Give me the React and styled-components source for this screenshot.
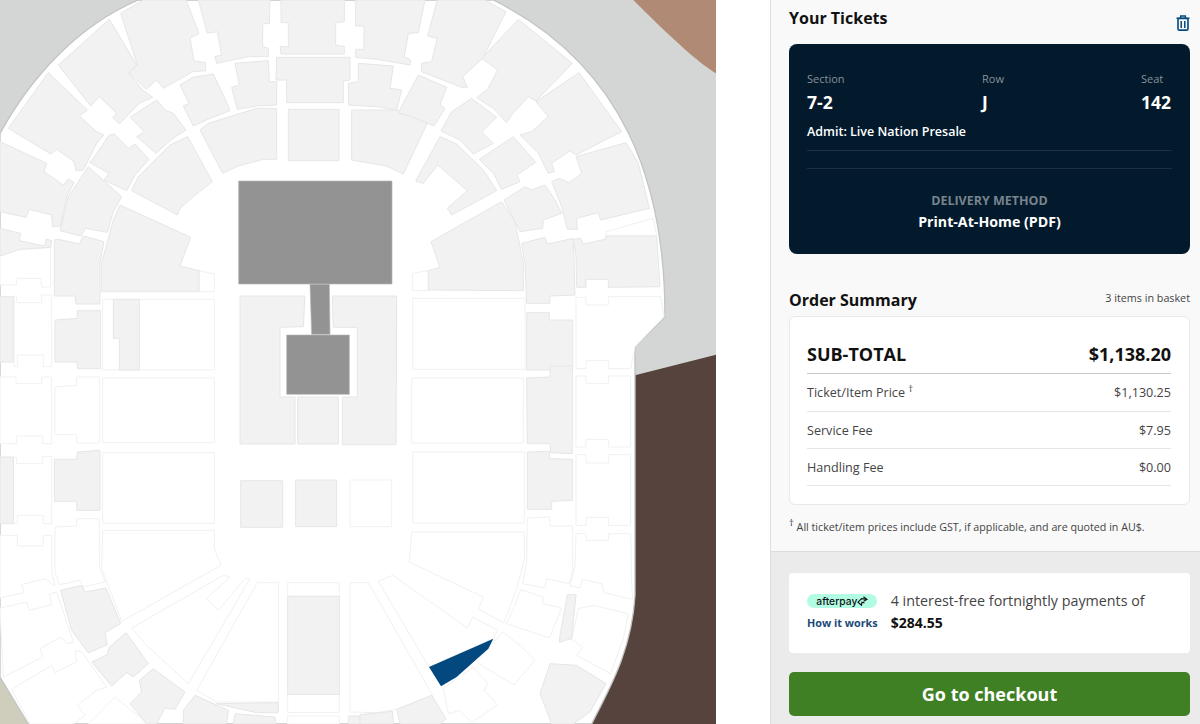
import React from 'react'
import styled, { createGlobalStyle } from 'styled-components'

const GlobalStyle = createGlobalStyle`
  html, body {
    margin: 0;
    padding: 0;
    height: 100%;
    overflow: hidden;
    background: #fff;
    font-family: "Open Sans", "Liberation Sans", sans-serif;
  }
  * { box-sizing: border-box; }
`

// seat map polygons, coordinates are 3x page pixels, one list per quadrant
const quadrants = [
  {
    dx: 0,
    dy: 0,
    shaded: [
      '362,40 430,0 558,0 597,100 570,115 582,183 617,188 617,212 578,215 490,265 470,240 438,268 385,215 412,195',
      '595,0 810,0 808,70 788,72 788,140 805,145 805,170 745,170 650,190 645,170 665,165 652,95 622,100',
      '843,0 1033,0 1033,65 1007,68 1007,135 1033,140 1033,162 843,162 840,140 865,140 865,68 843,68',
      '175,195 328,58 410,195 386,218 428,270 458,292 418,310 358,372 338,352 350,340 298,290 272,318',
      '25,385 145,218 262,330 238,348 290,395 312,405 290,430 250,510 228,512 222,485 170,448 152,462',
      '0,425 140,490 132,515 190,555 205,537 222,548 200,590 182,678 158,680 155,645 88,628 78,652 0,635',
      '0,685 62,700 58,722 133,738 140,717 155,722 152,742 60,748 0,768',
      '705,190 805,182 808,245 830,245 830,315 770,318 712,328 695,262 718,255',
      '830,172 1050,172 1050,240 1030,243 1030,308 860,308 860,240 828,240',
      '540,255 578,232 640,222 677,300 690,332 630,355 580,378 550,318 567,310',
      '390,352 470,300 495,330 520,340 558,390 515,418 468,460 410,410 433,395',
      '600,390 625,370 770,325 830,325 830,478 790,478 715,498 668,520',
      '865,328 1017,328 1017,482 865,482',
      '1055,330 1190,330 1208,338 1290,352 1210,522 1160,498 1055,480',
      '275,482 328,405 343,402 385,445 405,432 447,478 405,525 380,572 312,540 327,520 268,487',
      '395,572 415,530 470,475 510,435 563,410 637,545 580,590 540,625 532,645',
      '180,692 205,590 265,500 365,590 340,635 322,697 257,685 243,708',
      '305,790 340,660 360,615 572,712 540,798 597,812 597,875 305,875',
      '163,720 175,718 238,732 250,708 312,725 300,790 300,912 228,912 225,888 163,888',
      '165,960 232,955 232,932 302,932 302,1106 232,1106 232,1086 165,1086',
      '0,890 40,890 40,1086 0,1086',
      '340,898 418,898 418,1110 358,1110 358,1015 340,1015',
      '720,888 915,888 910,980 840,982 840,1191 885,1191 885,1332 720,1332',
      '997,888 1190,888 1188,1334 1027,1334 1027,1191 1072,1191 1072,982 1000,982',
      '893,1191 1015,1191 1015,1332 893,1332',
      '1045,250 1075,245 1075,190 1180,198 1170,265 1205,270 1190,330 1130,320 1045,315',
      '1067,0 1275,0 1255,98 1225,100 1213,170 1232,180 1230,195 1130,178 1067,172 1067,148 1092,148 1092,78 1067,78',
    ],
    blank: [
      '0,768 60,748 152,742 152,860 125,862 122,835 50,835 50,855 0,855',
      '597,812 643,822 643,875 597,875',
      '42,888 50,888 50,908 125,908 125,885 155,885 155,1100 130,1100 130,1065 52,1065 52,1100 42,1100',
      '308,898 643,898 643,1110 308,1110',
    ],
  },
  {
    dx: 1080,
    dy: 0,
    shaded: [
      '232,0 375,0 438,35 368,175 308,230 322,262 305,262 185,215 185,190 215,185 232,115 203,108',
      '475,58 637,190 528,303 505,290 455,345 440,368 400,325 350,293 383,268 413,210 365,175',
      '657,218 785,395 648,465 630,452 575,490 583,515 565,520 535,460 480,405 515,395 565,350 528,305',
      '798,428 835,490 868,625 722,660 715,638 650,655 652,688 622,687 605,620 575,545 598,535 628,548 665,520 648,470',
      '640,718 662,715 670,732 735,718 738,708 890,708 900,860 745,862 745,838 678,838 678,862 650,862 648,770',
      '175,225 260,262 240,315 255,325 222,378 155,350 115,338',
      '335,295 410,352 365,395 400,430 340,462 300,420 243,393 275,335',
      '358,478 460,410 527,487 470,525 480,545 425,568 400,520',
      '240,410 290,432 370,510 410,572 275,645 262,625 322,572 233,495 190,550 167,543',
      '213,725 425,605 465,665 490,790 490,872 205,870 205,812 240,802',
      '432,600 495,560 515,570 555,555 585,600 605,640 550,660 548,685 480,695',
      '485,730 555,712 562,732 640,715 645,885 570,888 570,910 500,910 495,790',
      '500,938 568,938 568,960 638,960 638,1110 500,1110',
    ],
    blank: [
      '738,695 880,655 890,708 738,708',
      '157,820 205,812 205,872 157,872',
      '158,895 495,895 495,1108 158,1108',
      '648,892 678,892 678,915 745,915 745,890 902,890 912,950 825,1040 812,1106 745,1106 745,1082 678,1082 678,1106 648,1106',
    ],
  },
  {
    dx: 0,
    dy: 1086,
    shaded: [
      '163,292 230,292 232,270 300,265 300,445 230,445 230,418 163,418',
      '0,285 40,285 40,485 0,485',
      '182,685 245,670 255,690 318,678 362,785 315,812 322,848 265,873 215,805',
      '275,900 322,878 328,855 378,812 445,905 400,945 380,932 335,972',
      '460,920 555,990 525,1042 495,1038 470,1086 440,1086 390,1025 425,990 418,955',
      '650,1025 835,1022 835,1052 770,1052',
      '863,703 1018,703 1018,997 863,997',
      '722,356 848,356 848,496 722,496',
      '887,354 1010,354 1010,494 887,494',
      '585,1000 685,1045 680,1086 550,1086 550,1045',
      '705,1055 825,1065 828,1086 700,1086',
      '1045,1062 1080,1062 1080,1086 1045,1086',
    ],
    blank: [
      '308,48 643,48 643,242 308,242',
      '308,272 643,272 643,484 308,484',
      '308,505 643,505 643,560 663,610 365,778 340,710 305,620',
      '165,75 230,70 230,45 298,45 298,243 230,243 230,218 165,218',
      '165,495 230,492 230,470 298,470 298,615 315,660 250,675 240,655 178,668 165,630',
      '0,45 48,45 48,65 125,65 125,45 155,45 155,245 128,245 128,222 50,222 50,245 0,245',
      '40,285 50,285 50,305 128,305 128,283 155,283 155,485 130,485 130,460 52,460 52,485 40,485',
      '0,520 52,520 52,552 130,552 130,520 155,520 155,630 165,672 135,650 65,668 72,692 0,708',
      '0,738 80,720 88,745 155,728 148,697 170,690 220,840 200,845 182,825 120,860 128,885 10,945',
      '35,982 155,910 165,932 230,900 225,865 245,870 320,975 290,985 232,1030 255,1060 220,1086 90,1086',
      '345,1005 445,1086 265,1086',
      '395,798 670,640 690,645 620,710 655,745 735,650 750,650 565,965 440,850',
      '772,662 835,662 835,1020 650,1020 590,985',
      '863,662 1018,662 1018,703 863,703',
      '863,997 1018,997 1018,1052 863,1052',
      '863,1062 1018,1062 1018,1086 863,1086',
      '1050,662 1105,662 1298,1000 1200,1040 1130,1052 1050,1050',
      '1050,354 1175,354 1175,494 1050,494',
    ],
  },
  {
    dx: 1080,
    dy: 1086,
    shaded: [
      '500,48 570,45 570,12 637,12 637,275 572,272 570,245 502,245',
      '502,270 568,268 568,290 637,292 637,415 575,418 575,442 502,442',
      '622,698 648,698 635,830 615,835 598,842 600,820',
      '540,995 570,905 650,910 738,965 690,1050 640,1086 575,1086',
      '110,1042 215,1000 258,1070 240,1086 120,1086',
      '0,1058 98,1048 100,1086 0,1086',
    ],
    blank: [
      '155,48 490,48 490,243 155,243',
      '158,270 493,270 493,483 158,483',
      '155,510 493,510 493,590 470,680 432,782 355,742 370,705 148,600',
      '55,658 98,640 322,798 338,765 413,805 400,830 207,915',
      '502,468 570,465 570,492 638,492 638,620 628,665 560,650 555,678 488,665 500,600',
      '648,42 678,42 678,65 745,65 745,42 812,42 812,255 745,255 745,232 678,232 678,255 648,255',
      '648,278 678,278 678,303 745,303 745,278 812,278 812,490 745,490 745,466 678,466 678,490 648,490',
      '648,515 678,515 678,535 745,535 745,515 812,515 815,660 818,712 732,692 725,665 668,652 660,678 630,672 645,610',
      '482,683 550,705 548,725 605,738 568,828 440,785 465,730',
      '700,730 805,755 790,830 752,935 650,880 668,855 635,832 655,740',
      '428,810 480,850 525,895 462,968 410,938 350,900',
      '250,980 340,915 383,965 372,985 412,1028 335,1082 300,1045 265,1055',
    ],
  },
]

const darkBlocks = [
  '716,543 1176,543 1176,852 716,852',
  '930,853 988,853 990,1003 935,1003',
  '860,1005 1048,1005 1048,1183 860,1183',
]

const SeatMap = () => (
  <MapSvg viewBox="0 0 2148 2172" preserveAspectRatio="none">
    <rect width="2148" height="2172" fill="#d3d6d4" />
    <path d="M1900,0 C1960,60 2080,180 2150,222 L2150,0 Z" fill="#b08a74" />
    <path d="M1905,1126 L2150,1064 L2150,2172 L1700,2172 Z" fill="#57433d" />
    <path d="M0,2020 L100,2172 L0,2172 Z" fill="#cfcdbb" />
    <path
      d="M0,400 C100,220 240,75 415,0 L1480,0 C1880,200 1995,560 1995,950 L1905,1040 L1905,1786 C1895,1960 1820,2080 1775,2172 L85,2172 L0,2031 Z"
      fill="#fff"
      stroke="#c2c5c3"
      strokeWidth="4"
    />
    {quadrants.map((q) => (
      <g key={`${q.dx}-${q.dy}`} transform={`translate(${q.dx} ${q.dy})`}>
        {q.blank.map((pts) => (
          <polygon key={pts} points={pts} fill="#fff" stroke="#f1f1f1" strokeWidth="3" />
        ))}
        {q.shaded.map((pts) => (
          <polygon key={pts} points={pts} fill="#f2f2f2" stroke="#e6e6e6" strokeWidth="3" />
        ))}
      </g>
    ))}
    {darkBlocks.map((pts) => (
      <polygon key={pts} points={pts} fill="#939393" stroke="#b5b5b5" strokeWidth="2" />
    ))}
    <polygon points="1287,2001 1480,1916 1465,1946 1370,2031 1323,2059" fill="#03497f" />
  </MapSvg>
)

const TrashIcon = () => (
  <svg width="14" height="16" viewBox="0 0 14 16" fill="none" stroke="#03497f">
    <path d="M0.5 3.2 H13.5" strokeWidth="1.5" />
    <path d="M4.6 3 V1 H9.4 V3" strokeWidth="1.3" />
    <rect x="2" y="3.5" width="10" height="11.6" rx="1" strokeWidth="1.6" />
    <path d="M5.2 6 V13 M8.8 6 V13" strokeWidth="1.5" />
  </svg>
)

const AfterpayLoop = () => (
  <svg width="11" height="10" viewBox="0 0 11 10" fill="none" stroke="#111" strokeWidth="1.2">
    <path d="M6.4 0.8 L10 3.4 L6.6 5.2" />
    <path d="M9.6 3.4 L4.6 2.6 L1 6.2 L4.4 9.2 L5 6.2 L7.4 6.8" />
  </svg>
)

export default function App() {
  return (
    <>
      <GlobalStyle />
      <Page>
        <MapPanel>
          <SeatMap />
        </MapPanel>
        <Sidebar>
          <Scroller>
            <HeadRow>
              <Title>Your Tickets</Title>
              <TrashButton>
                <TrashIcon />
              </TrashButton>
            </HeadRow>
            <TicketCard>
              <SeatGrid>
                <SeatCol>
                  <SeatLabel>Section</SeatLabel>
                  <SeatValue>7-2</SeatValue>
                </SeatCol>
                <SeatCol>
                  <SeatLabel>Row</SeatLabel>
                  <SeatValue>J</SeatValue>
                </SeatCol>
                <SeatCol>
                  <SeatLabel>Seat</SeatLabel>
                  <SeatValue>142</SeatValue>
                </SeatCol>
              </SeatGrid>
              <Admit>Admit: Live Nation Presale</Admit>
              <TicketRule />
              <Delivery>
                <DeliveryLabel>DELIVERY METHOD</DeliveryLabel>
                <DeliveryValue>Print-At-Home (PDF)</DeliveryValue>
              </Delivery>
            </TicketCard>
            <SummaryHead>
              <Title>Order Summary</Title>
              <ItemCount>3 items in basket</ItemCount>
            </SummaryHead>
            <SummaryCard>
              <TotalRow>
                <span>SUB-TOTAL</span>
                <span>$1,138.20</span>
              </TotalRow>
              <FeeRow>
                <span>
                  Ticket/Item Price <Dagger>†</Dagger>
                </span>
                <span>$1,130.25</span>
              </FeeRow>
              <FeeRow>
                <span>Service Fee</span>
                <span>$7.95</span>
              </FeeRow>
              <FeeRow>
                <span>Handling Fee</span>
                <span>$0.00</span>
              </FeeRow>
            </SummaryCard>
            <Footnote>
              <Dagger>†</Dagger> All ticket/item prices include GST, if applicable, and are quoted in AU$.
            </Footnote>
          </Scroller>
          <Footer>
            <AfterpayCard>
              <AfterpayLeft>
                <AfterpayBadge>
                  afterpay
                  <AfterpayLoop />
                </AfterpayBadge>
                <HowLink>How it works</HowLink>
              </AfterpayLeft>
              <AfterpayText>
                <span>4 interest-free fortnightly payments of</span>
                <strong>$284.55</strong>
              </AfterpayText>
            </AfterpayCard>
            <CheckoutButton>Go to checkout</CheckoutButton>
          </Footer>
        </Sidebar>
      </Page>
    </>
  )
}

const Page = styled.div`
  display: flex;
  justify-content: space-between;
  width: 1200px;
  height: 724px;
  overflow: hidden;
  background: #fff;
`

const MapPanel = styled.div`
  width: 716px;
  height: 724px;
  flex: none;
`

const MapSvg = styled.svg`
  display: block;
  width: 100%;
  height: 100%;
`

const Sidebar = styled.aside`
  display: flex;
  flex-direction: column;
  width: 430px;
  height: 724px;
  flex: none;
  border-left: 1px solid #dedede;
  background: #f9f9f9;
  color: #111;
`

const Scroller = styled.div`
  height: 552px;
  flex: none;
  padding: 7px 10px 0 18px;
  border-bottom: 1px solid #dcdcdc;
`

const HeadRow = styled.div`
  display: flex;
  justify-content: space-between;
  height: 37px;
`

const Title = styled.h2`
  margin: 0;
  font-size: 16px;
  line-height: 22px;
  font-weight: 700;
  color: #111;
`

const TrashButton = styled.span`
  display: flex;
  align-items: flex-start;
  padding-top: 8px;
`

const TicketCard = styled.div`
  height: 210px;
  padding: 27px 18px 0;
  border-radius: 8px;
  background: #021a2c;
  color: #fff;
`

const SeatGrid = styled.div`
  display: grid;
  grid-template-columns: 175px 1fr 31px;
`

const SeatCol = styled.div`
  display: flex;
  flex-direction: column;
`

const SeatLabel = styled.span`
  font-size: 11px;
  line-height: 15px;
  color: #87929b;
`

const SeatValue = styled.span`
  margin-top: 4px;
  font-size: 17.5px;
  line-height: 24px;
  font-weight: 700;
`

const Admit = styled.div`
  margin-top: 9px;
  padding-bottom: 9px;
  border-bottom: 1px solid #1b3042;
  font-size: 12.5px;
  line-height: 18px;
  font-weight: 600;
`

const TicketRule = styled.div`
  height: 1px;
  margin-top: 17px;
  background: #1b3042;
`

const Delivery = styled.div`
  display: flex;
  flex-direction: column;
  align-items: center;
  padding-top: 24px;
`

const DeliveryLabel = styled.span`
  font-size: 12.5px;
  line-height: 16px;
  font-weight: 700;
  color: #77838d;
`

const DeliveryValue = styled.span`
  margin-top: 3px;
  font-size: 14.2px;
  line-height: 20px;
  font-weight: 700;
`

const SummaryHead = styled.div`
  display: flex;
  justify-content: space-between;
  align-items: flex-start;
  height: 37px;
  margin-top: 26px;
  padding-top: 9px;
`

const ItemCount = styled.span`
  padding-top: 1px;
  font-size: 10.75px;
  line-height: 16px;
  color: #444;
`

const SummaryCard = styled.div`
  height: 189px;
  margin-top: -1px;
  padding: 21px 18px 0 17px;
  border: 1px solid #e9e9e9;
  border-radius: 6px;
  background: #fff;
`

const TotalRow = styled.div`
  display: flex;
  justify-content: space-between;
  align-items: center;
  height: 36px;
  padding-bottom: 3px;
  border-bottom: 1px solid #c9c9c9;
  font-size: 18px;
  font-weight: 700;
  color: #111;
`

const FeeRow = styled.div`
  display: flex;
  justify-content: space-between;
  align-items: center;
  height: 37px;
  border-bottom: 1px solid #e6e6e6;
  font-size: 12.6px;
  color: #444;

  ${TotalRow} + & {
    height: 38px;
  }
`

const Dagger = styled.sup`
  font-size: 9.5px;
  line-height: 0;
  color: #333;
`

const Footnote = styled.p`
  margin: 14px 0 0;
  font-size: 10.7px;
  line-height: 16px;
  color: #444;
`

const Footer = styled.div`
  display: flex;
  flex: 1;
  flex-direction: column;
  gap: 19px;
  padding: 21px 10px 0 18px;
  background: #ebebeb;
`

const AfterpayCard = styled.div`
  display: flex;
  align-items: center;
  gap: 13px;
  height: 80px;
  padding: 0 18px 3px;
  border-radius: 4px;
  background: #fff;
`

const AfterpayLeft = styled.div`
  display: flex;
  flex-direction: column;
  align-items: center;
  gap: 8px;
`

const AfterpayBadge = styled.div`
  display: flex;
  align-items: center;
  justify-content: center;
  gap: 0;
  width: 70px;
  height: 14px;
  border-radius: 7px;
  background: #b2fce4;
  font-family: Inter, "Liberation Sans", sans-serif;
  font-size: 10.3px;
  font-weight: 500;
  color: #111;
`

const HowLink = styled.a`
  font-size: 10.8px;
  line-height: 14px;
  font-weight: 700;
  color: #1b4a78;
`

const AfterpayText = styled.div`
  display: flex;
  flex-direction: column;
  gap: 3px;
  font-size: 14.3px;
  line-height: 19px;
  color: #444;

  strong {
    font-size: 14px;
    font-weight: 700;
    color: #111;
  }
`

const CheckoutButton = styled.button`
  width: 100%;
  height: 44px;
  border: 0;
  border-radius: 5px;
  background: #408025;
  color: #fff;
  font-family: inherit;
  font-size: 18px;
  font-weight: 700;
`
